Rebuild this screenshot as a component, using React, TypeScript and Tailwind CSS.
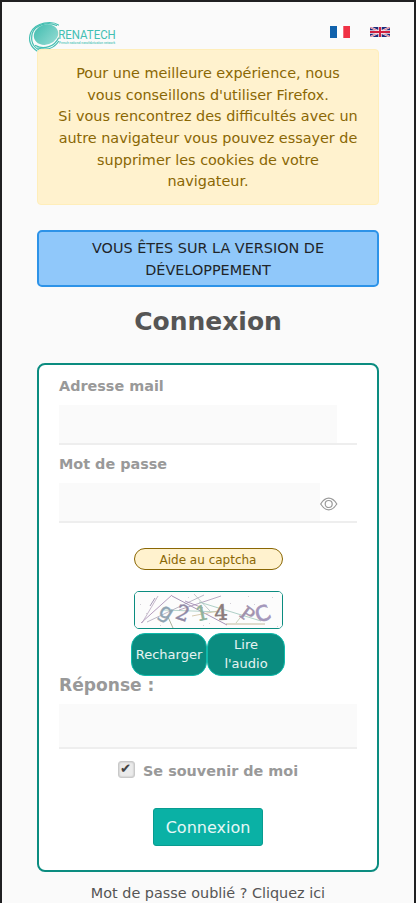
const captchaStrokes = [
  { d: 'M6 31 L37 3', c: '#a184ad' },
  { d: 'M7 31 L23 4', c: '#b5a3bd' },
  { d: 'M12 30 L69 3', c: '#a9a5b8' },
  { d: 'M15 14 L20 6', c: '#8c7da0' },
  { d: 'M37 4 L92 33', c: '#8f79a5' },
  { d: 'M29 18 L86 20', c: '#9fc7bd' },
  { d: 'M44 18 L86 4', c: '#a794b4' },
  { d: 'M59 2 L75 19', c: '#b4b9ba' },
  { d: 'M64 10 L126 29', c: '#9ac4b9' },
  { d: 'M50 9 L68 16', c: '#9e83b0' },
  { d: 'M57 24 L83 19', c: '#cdbd9a' },
  { d: 'M91 32 L130 32', c: '#b4aa86' },
  { d: 'M33 25 L38 36', c: '#989d83' },
  { d: 'M101 31 L112 17', c: '#bcc6a4' },
];

const captchaDots = [
  [53, 5], [113, 4], [119, 12], [5, 12], [137, 5], [142, 34], [25, 33], [74, 31], [95, 11], [132, 15], [68, 33], [11, 21],
];

function Logo() {
  return (
    <svg width="88" height="32" viewBox="0 0 88 32" className="block overflow-visible">
      <defs>
        <linearGradient id="disc" x1="0" y1="0" x2="0.7" y2="1">
          <stop offset="0" stopColor="#43bdb0" />
          <stop offset="1" stopColor="#8bd8cf" />
        </linearGradient>
      </defs>
      <ellipse cx="17" cy="12.6" rx="12.4" ry="10" fill="url(#disc)" transform="rotate(-18 17 12.6)" />
      <g fill="none" stroke="#45bfb2" strokeWidth="1.2" strokeLinecap="round">
        <path d="M29.5 3 C23 -1.5 7 0 1.8 10.5 C-1.2 18 1.5 25 8 29" />
        <path d="M27.5 3.5 C19 -.6 6 2.5 3.2 11.5 C1.2 20 5 25.5 11 28.5" />
        <path d="M29.5 16 C26 24 15 28.5 6.5 23.5" />
        <path d="M29.5 19.5 C25 26.5 17 28.5 8.5 26" />
      </g>
      <text x="29.2" y="17.4" textLength="57.6" lengthAdjust="spacingAndGlyphs" fontSize="12.4" fill="#43bfb3" className="font-['Roboto',sans-serif]">RENATECH</text>
      <text x="30" y="21.6" textLength="56" lengthAdjust="spacingAndGlyphs" fontSize="3.4" fontWeight="700" fill="#5cc8bd" className="font-['Liberation_Sans',sans-serif]">French national nanofabrication network</text>
    </svg>
  );
}

function Flags() {
  return (
    <div className="flex h-3 items-center gap-5">
      <svg width="20" height="12" viewBox="0 0 20 12">
        <path d="M0 0h7v12H0z" fill="#1162ac" />
        <path d="M7 0h6.5v12H7z" fill="#fff" />
        <path d="M13.3 0H20v12h-6.7z" fill="#f03245" />
      </svg>
      <svg width="20" height="10" viewBox="0 0 20 10">
        <path d="M0 0h20v10H0z" fill="#1b2a7b" />
        <path d="M0 0 20 10M20 0 0 10" stroke="#f5eef3" strokeWidth="2" />
        <path d="M0 0 20 10M20 0 0 10" stroke="#d83c58" strokeWidth="0.7" />
        <path d="M10 0v10M0 5h20" stroke="#f5eef3" strokeWidth="3.4" />
        <path d="M10 0v10M0 5h20" stroke="#d0203f" strokeWidth="2" />
      </svg>
    </div>
  );
}

function Captcha() {
  return (
    <svg width="147" height="36" viewBox="0 0 147 36" className="block">
      <rect width="147" height="36" fill="#fcfcfc" />
      {captchaStrokes.map((s) => (
        <path key={s.d} d={s.d} stroke={s.c} strokeWidth="0.8" fill="none" />
      ))}
      {captchaDots.map(([x, y]) => (
        <rect key={`${x}-${y}`} x={x} y={y} width="1" height="1" fill="#d3d0d6" />
      ))}
      <g textAnchor="middle" className="font-['DejaVu_Serif',serif]">
        <text y="4" fontSize="21" fill="#8fa3b2" stroke="#8fa3b2" strokeWidth="0.4" transform="translate(30 22.5) rotate(32)" className="font-['DejaVu_Sans',sans-serif]">g</text>
        <text y="8" fontSize="21" fill="#9088a4" stroke="#9088a4" strokeWidth="0.4" transform="translate(48 20.5) rotate(18)">2</text>
        <text y="7" fontSize="20" fill="#8fb29a" stroke="#8fb29a" strokeWidth="0.6" transform="translate(67 21) rotate(-12)">1</text>
        <text y="8" fontSize="21" fill="#8c7d7b" stroke="#8c7d7b" strokeWidth="0.6" transform="translate(86 20) rotate(-3)">4</text>
        <text y="6" fontSize="18.5" fill="#a191ad" stroke="#a191ad" strokeWidth="0.5" transform="translate(112 22.5) rotate(36)">P</text>
        <text y="8" fontSize="21" fill="#a497bb" stroke="#a497bb" strokeWidth="0.7" transform="translate(127.5 21) rotate(-20)" className="font-['DejaVu_Sans',sans-serif]">C</text>
      </g>
    </svg>
  );
}

function EyeIcon() {
  return (
    <svg width="18" height="14" viewBox="0 0 18 14" fill="none" stroke="#999" strokeWidth="1.2" className="block">
      <path d="M.7 7C3 3.2 5.7 1.2 8.7 1.2S14.5 3.2 16.8 7C14.5 10.8 11.7 12.8 8.7 12.8S3 10.8.7 7Z" />
      <circle cx="8.7" cy="7" r="3.5" />
    </svg>
  );
}

export default function App() {
  return (
    <div className="h-[903px] w-[416px] overflow-hidden border-x-2 border-t-2 border-[#202022] bg-[#fafafa] font-['DejaVu_Sans',sans-serif] text-[14.4px] leading-[21.6px] text-[#555]">
      <header className="flex h-[47px] items-start justify-between pr-6 pl-[27px]">
        <div className="pt-5"><Logo /></div>
        <div className="pt-6"><Flags /></div>
      </header>
      <main className="relative flex flex-col px-[35px]">
        <div className="h-[156px] rounded border border-[#ffeeba] bg-[#fff2ce] px-4 pt-[13.3px] text-center text-[#8a6704]">
          Pour une meilleure expérience, nous<br />vous conseillons d'utiliser Firefox.<br />Si vous rencontrez des difficultés avec un<br />autre navigateur vous pouvez essayer de<br />supprimer les cookies de votre<br />navigateur.
        </div>
        <div className="mt-[25px] h-[57px] rounded-[5px] border-2 border-[#2d93e8] bg-[#90c8fa] pt-[6px] text-center text-[#212529]">
          VOUS ÊTES SUR LA VERSION DE<br />DÉVELOPPEMENT
        </div>
        <h1 className="mt-[19px] h-[57px] text-center text-[25px] leading-[31px] font-bold">Connexion</h1>
        <form className="flex h-[509px] flex-col rounded-lg border-2 border-[#0b8c80] bg-white px-5 text-[#999]">
          <label className="mt-[11px] h-[29px] font-bold">Adresse mail</label>
          <div className="h-10 border-b-2 border-[#eee]">
            <div className="h-[38px] w-[278px] bg-[#fafafa]" />
          </div>
          <label className="mt-[9px] h-[29px] font-bold">Mot de passe</label>
          <div className="flex h-10 items-center border-b-2 border-[#eee]">
            <div className="h-[38px] w-[261px] bg-[#fafafa]" />
            <div className="pt-[3px]"><EyeIcon /></div>
          </div>
          <button type="button" className="mt-[25px] ml-[75px] h-[22px] w-[149px] rounded-full border border-[#8a6704] bg-[#fff2ce] pr-px text-[12px] leading-[22px] text-[#8a6704]">Aide au captcha</button>
          <div className="mt-[21px] ml-[75px] h-[38px] w-[149px] overflow-hidden rounded-[5px] border border-[#0b8c80]">
            <Captcha />
          </div>
          <div className="mt-1 ml-[72px] flex h-[43px] text-[13px] leading-[19px] text-white/90">
            <button type="button" className="w-[76px] rounded-[14px] border border-[#0fbaab] bg-[#0b8c80] whitespace-nowrap">Recharger</button>
            <button type="button" className="flex w-[78px] flex-col items-center rounded-[14px] border border-[#0fbaab] bg-[#0b8c80] pt-px"><span>Lire</span><span>l'audio</span></button>
          </div>
          <label className="-mt-px h-[29px] text-[17.1px] font-bold">Réponse :</label>
          <div className="h-[45px] border-b-2 border-[#eee] bg-[#fafafa]" />
          <div className="mt-3 flex h-[22px] items-start pl-[59px]">
            <span className="mr-2 flex h-[17px] w-[17px] items-center justify-center rounded-[3px] border border-[#c9c9c9] bg-[#ebebeb] pr-0.5 pb-0.5 text-[13.3px] leading-none text-[#444] shadow-[inset_0_0_2px_#aaa]">✔</span>
            <span className="leading-[21px] font-bold">Se souvenir de moi</span>
          </div>
          <button type="button" className="mt-[25px] h-[38px] w-[110px] self-center rounded-[3px] border border-[#089c90] bg-[#0ab1a5] pt-0.5 text-[16px] text-white/90">Connexion</button>
        </form>
        <p className="mt-[11px] text-center">Mot de passe oublié ? Cliquez ici</p>
      </main>
    </div>
  );
}
